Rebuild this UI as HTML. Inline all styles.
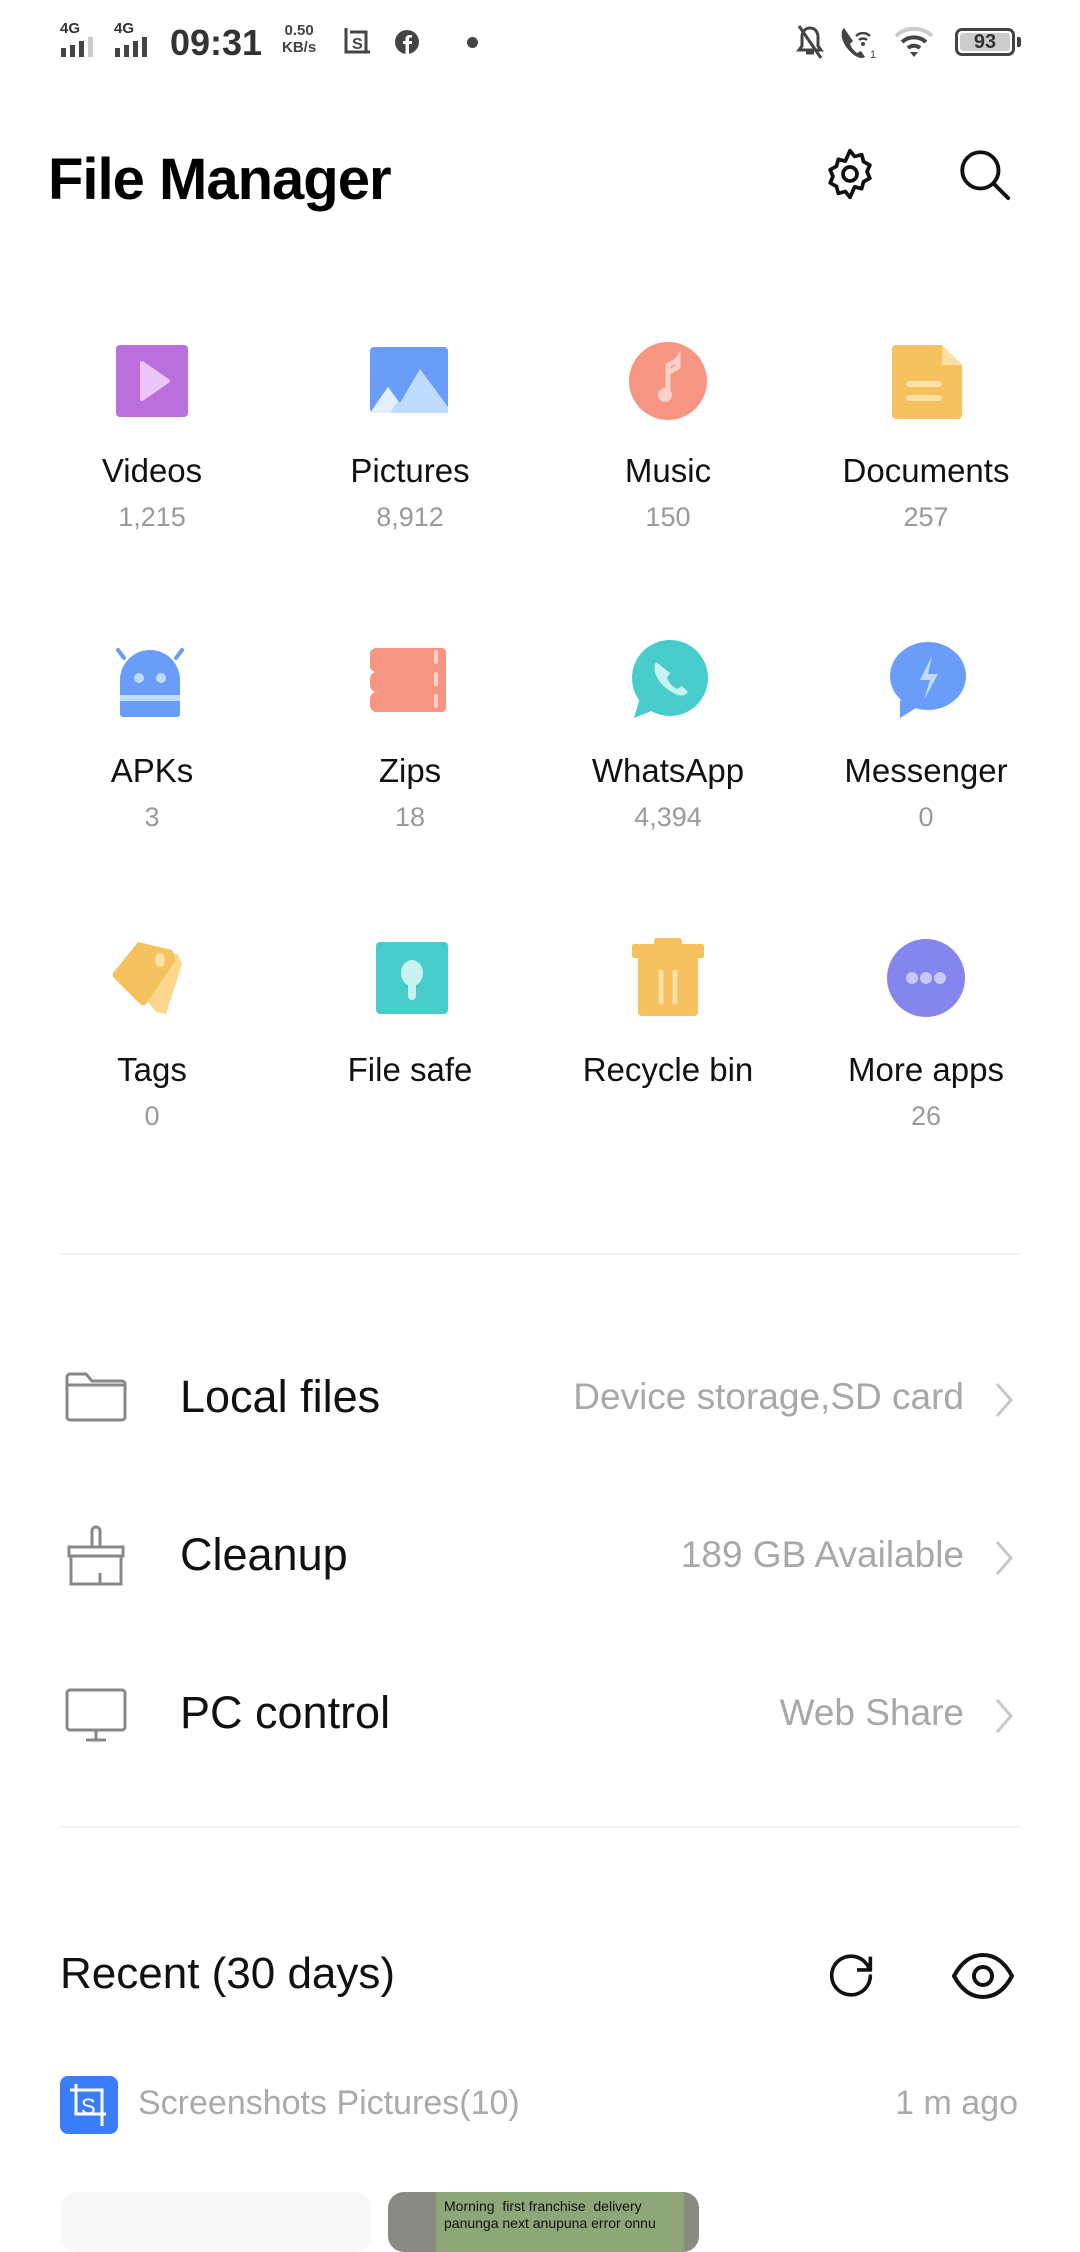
<!DOCTYPE html>
<html><head><meta charset="utf-8"><style>
*{margin:0;padding:0;box-sizing:border-box}
body{width:1080px;height:2214px;background:#fff;font-family:"Liberation Sans",sans-serif;position:relative;overflow:hidden;color:#000}
.a{position:absolute}
.lbl{position:absolute;width:258px;text-align:center;font-size:33px;color:#111}
.cnt{position:absolute;width:258px;text-align:center;font-size:27px;color:#9a9a9a}
.ic{position:absolute;width:80px;height:80px}
.row{position:absolute;left:0;width:1080px;height:100px}
.rl{position:absolute;left:180px;font-size:45px;color:#111;top:50%;transform:translateY(-50%)}
.rr{position:absolute;right:116px;font-size:37px;color:#a8a8a8;top:50%;transform:translateY(-50%)}
.div{position:absolute;left:61px;width:958px;height:2px;background:#f1f1f1}
</style></head><body>
<!-- status bar -->
<div class="a" style="left:60px;top:20px;font-size:15px;font-weight:bold;color:#333">4G</div>
<div class="a" style="left:114px;top:20px;font-size:15px;font-weight:bold;color:#333">4G</div>
<svg class="a" style="left:60px;top:36px" width="48" height="22"><rect x="1" y="12" width="5" height="9" fill="#444"/><rect x="10" y="9" width="5" height="12" fill="#444"/><rect x="19" y="5" width="5" height="16" fill="#444"/><rect x="28" y="1" width="5" height="20" fill="#ccc"/></svg>
<svg class="a" style="left:114px;top:36px" width="48" height="22"><rect x="1" y="12" width="5" height="9" fill="#444"/><rect x="10" y="9" width="5" height="12" fill="#444"/><rect x="19" y="5" width="5" height="16" fill="#444"/><rect x="28" y="1" width="5" height="20" fill="#444"/></svg>
<div class="a" style="left:170px;top:22px;font-size:36px;font-weight:bold;color:#333">09:31</div>
<div class="a" style="left:282px;top:22px;font-size:15px;font-weight:bold;color:#444;line-height:17px;text-align:center">0.50<br>KB/s</div>
<svg class="a" style="left:342px;top:26px" width="30" height="32"><path d="M4 2v24h24M8 6h16v20" fill="none" stroke="#444" stroke-width="3"/><text x="10" y="23" font-size="16" font-weight="bold" fill="#444" font-family="Liberation Sans">S</text></svg>
<svg class="a" style="left:394px;top:29px" width="26" height="26"><circle cx="13" cy="13" r="12" fill="#444"/><path d="M15 25V15h3v-3h-3v-2c0-1 .5-1.5 1.5-1.5H18V6h-2.5c-2.5 0-4 1.5-4 4v2H9v3h2.5v10" fill="#fff"/></svg>
<div class="a" style="left:467px;top:37px;width:11px;height:11px;border-radius:50%;background:#444"></div>
<svg class="a" style="left:795px;top:24px" width="30" height="36"><path d="M15 4c-5 0-8 4-8 9v9l-3 4h22l-3-4v-9c0-5-3-9-8-9zM11 29h8" fill="none" stroke="#444" stroke-width="3"/><path d="M4 2l22 32" stroke="#444" stroke-width="3"/></svg>
<svg class="a" style="left:838px;top:24px" width="40" height="38"><path d="M6 4c-4 3-3 12 3 20s14 12 18 9l-4-6-4 2c-3-2-6-6-7-9l3-3z" fill="#444"/><path d="M18 12a10 10 0 0 1 14 0M21 16a6 6 0 0 1 8 0" fill="none" stroke="#444" stroke-width="2.5"/><circle cx="25" cy="20" r="2" fill="#444"/><text x="32" y="34" font-size="11" fill="#444" font-family="Liberation Sans">1</text></svg>
<svg class="a" style="left:893px;top:24px" width="42" height="36"><path d="M3 12a26 26 0 0 1 36 0" fill="none" stroke="#ccc" stroke-width="4"/><path d="M9 18a18 18 0 0 1 24 0M15 24a9 9 0 0 1 12 0" fill="none" stroke="#444" stroke-width="4"/><path d="M17 28l4 5 4-5z" fill="#444"/></svg>
<div class="a" style="left:955px;top:28px;width:60px;height:28px;border:3px solid #444;border-radius:7px;background:#fff"><div style="position:absolute;left:2px;top:2px;right:2px;bottom:2px;background:#ccc;border-radius:3px;font-size:20px;font-weight:bold;color:#333;text-align:center;line-height:18px">93</div></div>
<div class="a" style="left:1017px;top:37px;width:4px;height:10px;background:#444;border-radius:0 2px 2px 0"></div>

<!-- header -->
<div class="a" style="left:48px;top:146px;font-size:58px;font-weight:bold;letter-spacing:-1px">File Manager</div>
<svg class="a" style="left:822px;top:146px" width="56" height="56" viewBox="0 0 24 24"><path d="M12 2l2 2.5 3-.8.8 3 2.7 1.5-1.2 2.8 1.2 2.8-2.7 1.5-.8 3-3-.8L12 22l-2-2.5-3 .8-.8-3L3.5 15.8l1.2-2.8-1.2-2.8 2.7-1.5.8-3 3 .8z" fill="none" stroke="#111" stroke-width="1.6" stroke-linejoin="round"/><circle cx="12" cy="12" r="3" fill="none" stroke="#111" stroke-width="1.6"/></svg>
<svg class="a" style="left:955px;top:145px" width="58" height="58" viewBox="0 0 24 24"><circle cx="10.5" cy="10.5" r="7.5" fill="none" stroke="#111" stroke-width="1.6"/><path d="M16 16l6 6" stroke="#111" stroke-width="1.6" stroke-linecap="round"/></svg>

<!-- grid icons row1 -->
<svg class="ic" style="left:112px;top:341px" viewBox="0 0 80 80"><rect x="4" y="4" width="72" height="72" rx="4" fill="#bb6fdc"/><path d="M30 22l26 18-26 18z" fill="#ebc6fb" stroke="#ebc6fb" stroke-width="4" stroke-linejoin="round"/></svg>
<svg class="ic" style="left:370px;top:341px" viewBox="0 0 80 80"><rect x="0" y="6" width="78" height="66" rx="4" fill="#6a9df8"/><path d="M0 72L18 46l12 16 20-34 28 38v6z" fill="#c0dcfc"/><path d="M0 72L18 46l10 14-8 12z" fill="#e2effd"/></svg>
<svg class="ic" style="left:628px;top:341px" viewBox="0 0 80 80"><circle cx="40" cy="40" r="39" fill="#f69582"/><path d="M40 52V24c4-2 8-3 10-6v8c-3 2-6 3-8 5" fill="none" stroke="#fbd0c8" stroke-width="5" stroke-linecap="round"/><circle cx="37" cy="54" r="7" fill="#fbd0c8"/></svg>
<svg class="ic" style="left:886px;top:341px" viewBox="0 0 80 80"><path d="M8 4h48l20 20v50a4 4 0 0 1-4 4H10a4 4 0 0 1-4-4V8a4 4 0 0 1 4-4z" fill="#f6c25f"/><path d="M56 4v20h20z" fill="#fbe0a6"/><rect x="20" y="40" width="36" height="6" rx="3" fill="#fbe0a6"/><rect x="20" y="54" width="36" height="6" rx="3" fill="#fbe0a6"/></svg>
<div class="lbl" style="left:23px;top:452px">Videos</div><div class="cnt" style="left:23px;top:502px">1,215</div>
<div class="lbl" style="left:281px;top:452px">Pictures</div><div class="cnt" style="left:281px;top:502px">8,912</div>
<div class="lbl" style="left:539px;top:452px">Music</div><div class="cnt" style="left:539px;top:502px">150</div>
<div class="lbl" style="left:797px;top:452px">Documents</div><div class="cnt" style="left:797px;top:502px">257</div>

<!-- row2 -->
<svg class="ic" style="left:112px;top:640px" viewBox="0 0 80 80"><path d="M6 10l6 8M70 10l-6 8" stroke="#6a9df8" stroke-width="4" stroke-linecap="round"/><path d="M8 74V40a30 30 0 0 1 60 0v34a3 3 0 0 1-3 3H11a3 3 0 0 1-3-3z" fill="#6a9df8"/><rect x="8" y="55" width="60" height="6" fill="#c0dcfc"/><circle cx="27" cy="38" r="5" fill="#c0dcfc"/><circle cx="49" cy="38" r="5" fill="#c0dcfc"/></svg>
<svg class="ic" style="left:370px;top:640px" viewBox="0 0 80 80"><path d="M6 8h66a4 4 0 0 1 4 4v56a4 4 0 0 1-4 4H6a6 9 0 0 1 0-20 6 9 0 0 1 0-20 6 9 0 0 1 0-24z" fill="#f69582"/><path d="M66 12v10M66 34v10M66 56v10" stroke="#fbd0c8" stroke-width="4" stroke-linecap="round"/></svg>
<svg class="ic" style="left:628px;top:640px" viewBox="0 0 80 80"><circle cx="42" cy="38" r="38" fill="#48cccc"/><path d="M6 78l6-20 14 12z" fill="#48cccc"/><path d="M28 22c-4 6 0 18 10 26s18 10 22 4l-6-6-5 3c-4-2-8-6-10-11l3-5z" fill="#c8f3f1"/></svg>
<svg class="ic" style="left:886px;top:640px" viewBox="0 0 80 80"><ellipse cx="42" cy="36" rx="38" ry="34" fill="#6a9df8"/><path d="M14 60v18l16-10z" fill="#6a9df8"/><path d="M46 16L34 40h10l-6 20 14-26H42z" fill="#c0dcfc"/></svg>
<div class="lbl" style="left:23px;top:752px">APKs</div><div class="cnt" style="left:23px;top:802px">3</div>
<div class="lbl" style="left:281px;top:752px">Zips</div><div class="cnt" style="left:281px;top:802px">18</div>
<div class="lbl" style="left:539px;top:752px">WhatsApp</div><div class="cnt" style="left:539px;top:802px">4,394</div>
<div class="lbl" style="left:797px;top:752px">Messenger</div><div class="cnt" style="left:797px;top:802px">0</div>

<!-- row3 -->
<svg class="ic" style="left:108px;top:938px" viewBox="0 0 80 80"><path d="M40 10l30 6 4 10-16 50-10-2-28-36z" fill="#fcd88e"/><path d="M30 4l34 8 4 10-30 44a4 4 0 0 1-6 0L6 40a4 4 0 0 1 0-6z" fill="#f6c25f"/><ellipse cx="52" cy="22" rx="5" ry="7" fill="#fbe0a6"/></svg>
<svg class="ic" style="left:370px;top:938px" viewBox="0 0 80 80"><rect x="6" y="4" width="72" height="72" rx="4" fill="#48cccc"/><ellipse cx="42" cy="35" rx="11" ry="13" fill="#c8f3f1"/><rect x="38" y="40" width="8" height="22" rx="4" fill="#c8f3f1"/></svg>
<svg class="ic" style="left:628px;top:938px" viewBox="0 0 80 80"><rect x="26" y="0" width="28" height="10" rx="3" fill="#f6c25f"/><rect x="4" y="6" width="72" height="14" rx="2" fill="#f6c25f"/><path d="M10 20h60v54a4 4 0 0 1-4 4H14a4 4 0 0 1-4-4z" fill="#f6c25f"/><path d="M33 34v30M47 34v30" stroke="#fbe0a6" stroke-width="5" stroke-linecap="round"/></svg>
<svg class="ic" style="left:886px;top:938px" viewBox="0 0 80 80"><circle cx="40" cy="40" r="39" fill="#8486ee"/><circle cx="26" cy="40" r="6" fill="#c8c9f8"/><circle cx="40" cy="40" r="6" fill="#c8c9f8"/><circle cx="54" cy="40" r="6" fill="#c8c9f8"/></svg>
<div class="lbl" style="left:23px;top:1051px">Tags</div><div class="cnt" style="left:23px;top:1101px">0</div>
<div class="lbl" style="left:281px;top:1051px">File safe</div>
<div class="lbl" style="left:539px;top:1051px">Recycle bin</div>
<div class="lbl" style="left:797px;top:1051px">More apps</div><div class="cnt" style="left:797px;top:1101px">26</div>

<div class="div" style="top:1253px"></div>

<!-- rows -->
<div class="row" style="top:1347px">
<svg class="a" style="left:64px;top:24px" width="64" height="52" viewBox="0 0 64 52"><path d="M3 6a3 3 0 0 1 3-3h16l6 7h30a3 3 0 0 1 3 3v33a3 3 0 0 1-3 3H6a3 3 0 0 1-3-3z" fill="none" stroke="#888" stroke-width="3"/><path d="M3 14h58" stroke="#888" stroke-width="3"/></svg>
<div class="rl">Local files</div><div class="rr">Device storage,SD card</div>
<svg class="a" style="left:994px;top:34px" width="20" height="38"><path d="M3 3l14 16L3 35" fill="none" stroke="#c8c8c8" stroke-width="3"/></svg>
</div>
<div class="row" style="top:1505px">
<svg class="a" style="left:66px;top:20px" width="60" height="62" viewBox="0 0 60 62"><path d="M26 22V6a4 4 0 0 1 8 0v16" fill="none" stroke="#888" stroke-width="3"/><path d="M3 22h54v9H3zM5 31v28h50V31M34 59V48" fill="none" stroke="#888" stroke-width="3"/></svg>
<div class="rl">Cleanup</div><div class="rr">189 GB Available</div>
<svg class="a" style="left:994px;top:34px" width="20" height="38"><path d="M3 3l14 16L3 35" fill="none" stroke="#c8c8c8" stroke-width="3"/></svg>
</div>
<div class="row" style="top:1663px">
<svg class="a" style="left:64px;top:24px" width="64" height="56" viewBox="0 0 64 56"><rect x="3" y="3" width="58" height="40" rx="3" fill="none" stroke="#888" stroke-width="3"/><path d="M32 43v9M22 53h20" stroke="#888" stroke-width="3"/></svg>
<div class="rl">PC control</div><div class="rr">Web Share</div>
<svg class="a" style="left:994px;top:34px" width="20" height="38"><path d="M3 3l14 16L3 35" fill="none" stroke="#c8c8c8" stroke-width="3"/></svg>
</div>

<div class="div" style="top:1826px"></div>

<div class="a" style="left:60px;top:1949px;font-size:44px;color:#111">Recent (30 days)</div>
<svg class="a" style="left:822px;top:1947px" width="58" height="58" viewBox="0 0 24 24"><path d="M19.5 9A8 8 0 1 0 20 12" fill="none" stroke="#111" stroke-width="1.5" stroke-linecap="round"/><path d="M20 4v5.5h-5.5" fill="none" stroke="#111" stroke-width="1.5" stroke-linejoin="round"/></svg>
<svg class="a" style="left:950px;top:1951px" width="66" height="50" viewBox="0 0 33 25"><path d="M2 12.5C6 5 11 2 16.5 2S27 5 31 12.5C27 20 22 23 16.5 23S6 20 2 12.5z" fill="none" stroke="#111" stroke-width="2"/><circle cx="16.5" cy="12.5" r="4.5" fill="none" stroke="#111" stroke-width="2"/></svg>

<svg class="a" style="left:60px;top:2076px" width="58" height="58" viewBox="0 0 58 58"><rect width="58" height="58" rx="8" fill="#3b7cf8"/><path d="M16 8v30h30M10 14h32v36" fill="none" stroke="#fff" stroke-width="3"/><text x="21" y="38" font-size="22" fill="#fff" font-family="Liberation Sans">S</text></svg>
<div class="a" style="left:138px;top:2084px;font-size:34px;color:#aaa">Screenshots Pictures(10)</div>
<div class="a" style="right:62px;top:2084px;font-size:34px;color:#aaa">1 m ago</div>

<div class="a" style="left:61px;top:2192px;width:310px;height:60px;background:#f8f8f8;border-radius:16px"></div>
<div class="a" style="left:388px;top:2192px;width:311px;height:60px;background:#8a8a84;border-radius:16px;overflow:hidden">
<div style="position:absolute;left:48px;top:0;width:248px;height:60px;background:#8ea778;font-size:14px;color:#111;line-height:17px;padding:6px 0 0 8px">Morning &nbsp;first franchise &nbsp;delivery<br>panunga next anupuna error onnu</div></div>
</body></html>
